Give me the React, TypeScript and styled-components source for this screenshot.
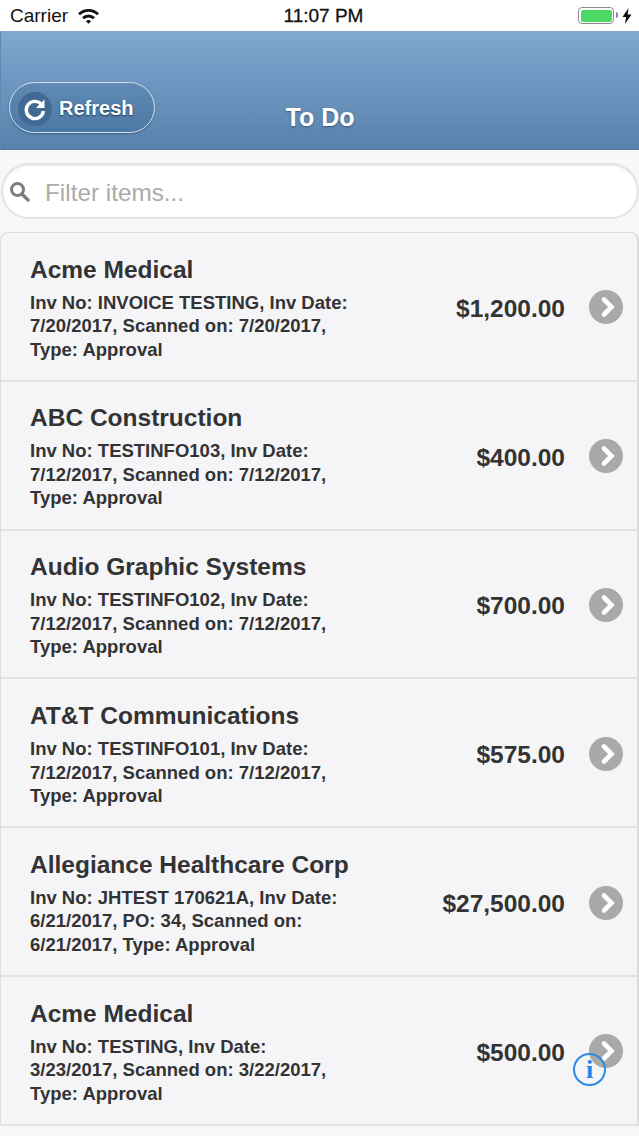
import styled, { createGlobalStyle } from 'styled-components';

interface Invoice {
  vendor: string;
  lines: string[];
  amount: string;
}

const invoices: Invoice[] = [
  { vendor: 'Acme Medical', lines: ['Inv No: INVOICE TESTING, Inv Date:', '7/20/2017, Scanned on: 7/20/2017,', 'Type: Approval'], amount: '$1,200.00' },
  { vendor: 'ABC Construction', lines: ['Inv No: TESTINFO103, Inv Date:', '7/12/2017, Scanned on: 7/12/2017,', 'Type: Approval'], amount: '$400.00' },
  { vendor: 'Audio Graphic Systems', lines: ['Inv No: TESTINFO102, Inv Date:', '7/12/2017, Scanned on: 7/12/2017,', 'Type: Approval'], amount: '$700.00' },
  { vendor: 'AT&T Communications', lines: ['Inv No: TESTINFO101, Inv Date:', '7/12/2017, Scanned on: 7/12/2017,', 'Type: Approval'], amount: '$575.00' },
  { vendor: 'Allegiance Healthcare Corp', lines: ['Inv No: JHTEST 170621A, Inv Date:', '6/21/2017, PO: 34, Scanned on:', '6/21/2017, Type: Approval'], amount: '$27,500.00' },
  { vendor: 'Acme Medical', lines: ['Inv No: TESTING, Inv Date:', '3/23/2017, Scanned on: 3/22/2017,', 'Type: Approval'], amount: '$500.00' },
];

const GlobalStyle = createGlobalStyle`
  html, body {
    margin: 0;
    padding: 0;
    background: #f7f7f9;
  }
  body {
    font-family: 'Liberation Sans', Arial, sans-serif;
  }
`;

const Page = styled.div`
  position: relative;
  width: 639px;
  height: 1136px;
  overflow: hidden;
  background: #f8f8fa;
`;

const StatusBar = styled.div`
  display: grid;
  grid-template-columns: 1fr auto 1fr;
  align-items: center;
  height: 31px;
  padding: 0 7px 0 10px;
  box-sizing: border-box;
  background: #fff;
  color: #111;
`;

const StatusLeft = styled.div`
  display: flex;
  align-items: center;
  gap: 9px;
  font-size: 19px;
`;

const StatusTime = styled.div`
  margin-left: 5px;
  font-size: 19px;
  -webkit-text-stroke: 0.3px #111;
`;

const StatusRight = styled.div`
  display: flex;
  align-items: center;
  justify-content: flex-end;
  gap: 8px;
`;

const Battery = styled.div`
  position: relative;
  width: 36px;
  height: 17px;
  box-sizing: border-box;
  border: 1.5px solid #8d8d8d;
  border-radius: 4px;
  padding: 1.5px;

  &::before {
    content: '';
    display: block;
    height: 100%;
    border-radius: 2px;
    background: #4cd964;
  }

  &::after {
    content: '';
    position: absolute;
    right: -4.5px;
    top: 4px;
    width: 2px;
    height: 6px;
    border-radius: 0 2px 2px 0;
    background: #8d8d8d;
  }
`;

const Header = styled.header`
  display: grid;
  grid-template-columns: 1fr auto 1fr;
  align-items: end;
  height: 119px;
  padding: 0 10px 16px 8px;
  box-sizing: border-box;
  background: linear-gradient(#81a8cd 0%, #7198c4 40%, #5d87b0 85%, #5882ab 100%);
  border-left: 1px solid #5f89b3;
  border-bottom: 1px solid #5077a0;
`;

const RefreshButton = styled.button`
  display: flex;
  align-items: center;
  gap: 7px;
  width: 146px;
  height: 51px;
  padding: 2px 0 0 8px;
  box-sizing: border-box;
  border: 1.5px solid #d5e1ec;
  border-radius: 26px;
  background: linear-gradient(#5f8ab4, #4c79a4);
  box-shadow: 0 1px 2px rgba(30, 50, 80, 0.45);
  color: #fff;
  font-family: inherit;
  font-size: 20px;
  font-weight: 700;
  text-shadow: 0 1px 2px #1c3350;
`;

const RefreshIcon = styled.span`
  display: flex;
  align-items: center;
  justify-content: center;
  width: 34px;
  height: 34px;
  border-radius: 50%;
  background: #406a94;
`;

const Title = styled.h1`
  margin: 0 0 1px 2px;
  font-size: 25px;
  font-weight: 700;
  color: #fff;
  text-shadow: 0 1px 2px #35577c;
`;

const SearchWrap = styled.div`
  padding: 13px 0 13px 1px;
`;

const SearchBox = styled.div`
  display: flex;
  align-items: center;
  gap: 15px;
  height: 56px;
  padding: 0 0 0 6px;
  box-sizing: border-box;
  background: #fff;
  border: 2px solid #e3e3e3;
  border-radius: 28px;
  box-shadow: inset 0 1px 2px rgba(0, 0, 0, 0.08);
  color: #ababab;
  font-size: 24.3px;
`;

const Placeholder = styled.span`
  margin-top: 3px;
`;

const List = styled.ul`
  list-style: none;
  margin: 0;
  padding: 0;
  background: #f5f5f8;
  border: 1px solid #dcdcdc;
  border-right-width: 2px;
  border-bottom: none;
  border-radius: 8px 8px 0 0;
`;

const Row = styled.li`
  display: flex;
  align-items: center;
  height: 148.8px;
  padding: 5px 14px 0 29px;
  box-sizing: border-box;
  border-bottom: 2px solid #e2e2e4;
  color: #333;
`;

const RowText = styled.div`
  flex: 1;
  min-width: 0;
  margin-bottom: 2px;
`;

const Vendor = styled.div`
  font-size: 24.5px;
  font-weight: 700;
  line-height: 30px;
  margin-bottom: 6px;
`;

const Detail = styled.div`
  font-size: 18.5px;
  font-weight: 700;
  line-height: 23.5px;
  white-space: nowrap;
`;

const Amount = styled.div`
  font-size: 24.5px;
  font-weight: 700;
  margin-right: 24px;
  white-space: nowrap;
`;

const Chevron = styled.span`
  display: flex;
  align-items: center;
  justify-content: center;
  width: 34px;
  height: 34px;
  margin-bottom: 3px;
  border-radius: 50%;
  background: #a9a9a9;
`;

const InfoButton = styled.div`
  position: absolute;
  left: 573px;
  top: 1053px;
  width: 33px;
  height: 33px;
  box-sizing: border-box;
  border: 2px solid #2a8ae6;
  border-radius: 50%;
  display: flex;
  align-items: center;
  justify-content: center;
  color: #1f86e8;
  font-family: 'Liberation Serif', serif;
  font-size: 26px;
  font-weight: 700;
`;

export default function App() {
  return (
    <Page>
      <GlobalStyle />
      <StatusBar>
        <StatusLeft>
          Carrier
          <svg width="23" height="17" viewBox="0 0 23 17">
            <path d="M1 6.2a15 15 0 0 1 21 0l-2 2.1a12 12 0 0 0-17 0z" fill="#111" />
            <path d="M5 10.2a9.4 9.4 0 0 1 13 0l-2.1 2.1a6.4 6.4 0 0 0-8.8 0z" fill="#111" />
            <path d="M9 14.2a3.6 3.6 0 0 1 5 0l-2.5 2.6z" fill="#111" />
          </svg>
        </StatusLeft>
        <StatusTime>11:07 PM</StatusTime>
        <StatusRight>
          <Battery />
          <svg width="10" height="16" viewBox="0 0 10 16">
            <path d="M6.5 0 0.5 9h3.6L3 16l6.5-9.6H5.7z" fill="#111" />
          </svg>
        </StatusRight>
      </StatusBar>
      <Header>
        <div>
          <RefreshButton>
            <RefreshIcon>
              <svg width="26" height="26" viewBox="0 0 26 26">
                <path d="M20 9.2A8.6 8.6 0 1 0 21.4 15" fill="none" stroke="#fff" strokeWidth="3.4" />
                <path d="M22.5 3.5v8.6h-8.6z" fill="#fff" />
              </svg>
            </RefreshIcon>
            Refresh
          </RefreshButton>
        </div>
        <Title>To Do</Title>
        <div />
      </Header>
      <SearchWrap>
        <SearchBox>
          <svg width="21" height="21" viewBox="0 0 21 21">
            <circle cx="8.5" cy="8.5" r="6" fill="none" stroke="#7d7d7d" strokeWidth="3" />
            <path d="M13 13l6 6" stroke="#7d7d7d" strokeWidth="3.4" strokeLinecap="round" />
          </svg>
          <Placeholder>Filter items...</Placeholder>
        </SearchBox>
      </SearchWrap>
      <List>
        {invoices.map((inv, i) => (
          <Row key={i}>
            <RowText>
              <Vendor>{inv.vendor}</Vendor>
              {inv.lines.map((line) => (
                <Detail key={line}>{line}</Detail>
              ))}
            </RowText>
            <Amount>{inv.amount}</Amount>
            <Chevron>
              <svg width="34" height="34" viewBox="0 0 34 34">
                <path d="M15 9.5 22.5 17 15 24.5" fill="none" stroke="#fff" strokeWidth="4.6" strokeLinecap="round" />
              </svg>
            </Chevron>
          </Row>
        ))}
      </List>
      <InfoButton>i</InfoButton>
    </Page>
  );
}
